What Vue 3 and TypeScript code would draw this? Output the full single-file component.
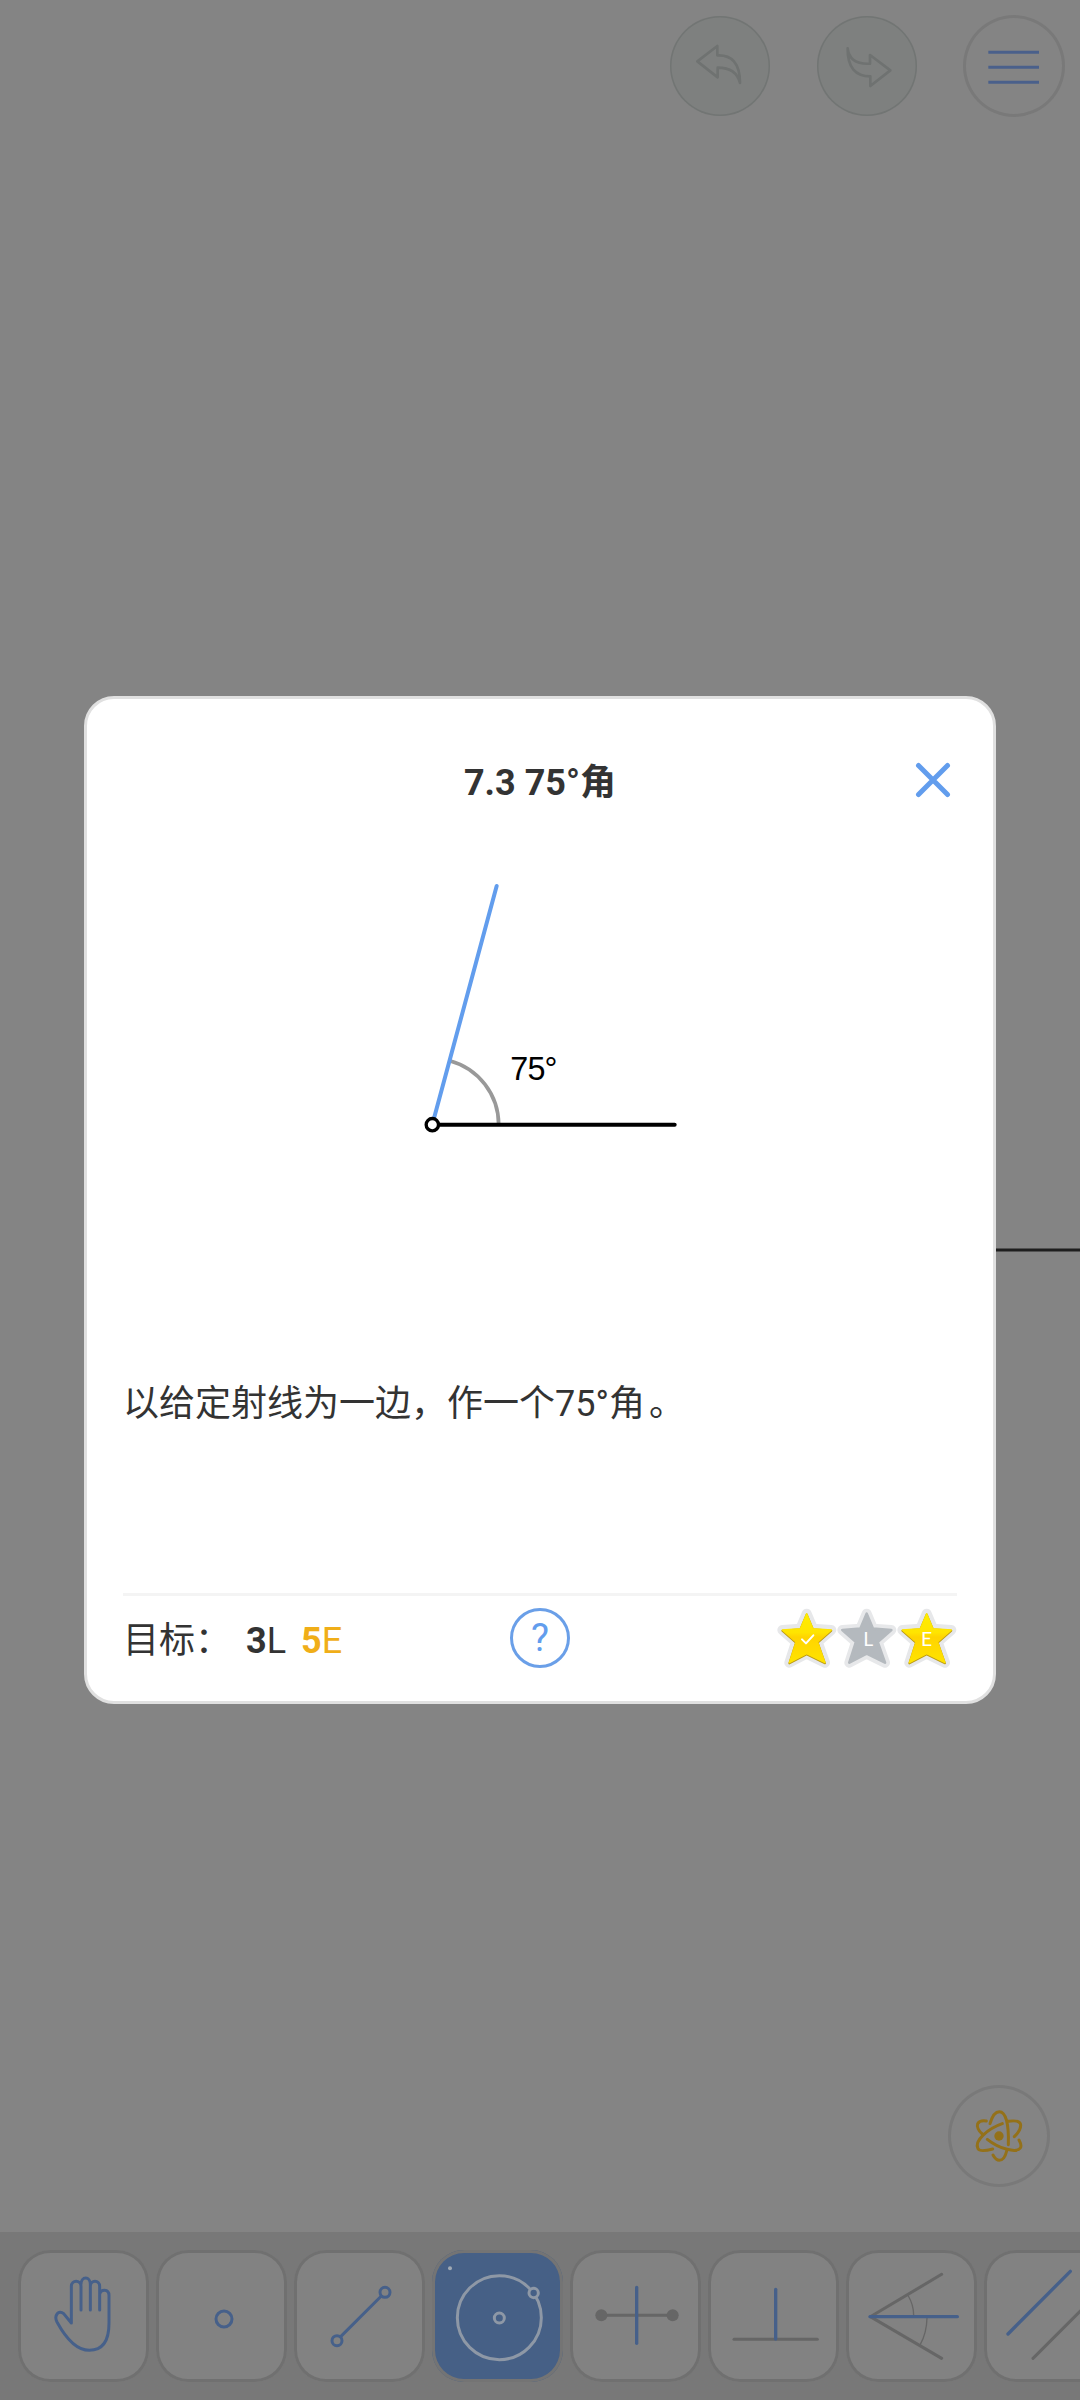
<script setup lang="ts">
type Tool = 'move' | 'point' | 'segment' | 'circle' | 'bisector' | 'perpendicular' | 'angle' | 'parallel'

interface ToolItem {
  id: Tool
  box: string
}

const tools: ToolItem[] = [
  { id: 'move', box: '56 90 393 396' },
  { id: 'point', box: '470 90 393 396' },
  { id: 'segment', box: '884 90 393 396' },
  { id: 'circle', box: '38 90 393 396' },
  { id: 'bisector', box: '452 90 393 396' },
  { id: 'perpendicular', box: '866 90 393 396' },
  { id: 'angle', box: '50 90 393 396' },
  { id: 'parallel', box: '464 90 393 396' },
]
const active: Tool = 'circle'

const stars = [
  { mark: '', earned: true },
  { mark: 'L', earned: false },
  { mark: 'E', earned: true },
]
const starPath = 'M89 17L108 62L163 66L122 102L144 164L89 137L37 164L57 102L16 66L70 62Z'
</script>

<template>
  <main class="screen">
    <header class="topbar">
      <button class="round flat" aria-label="undo">
        <svg viewBox="60 48 300 300">
          <path d="M142 184L202 138V166C244 164 270 188 270 249C262 216 240 203 203 203V232Z" />
        </svg>
      </button>
      <button class="round flat" aria-label="redo">
        <svg viewBox="501 48 300 300">
          <path d="M593 145C597 180 620 193 660 191V165L721 211L661 258V229C617 229 592 203 593 145Z" />
        </svg>
      </button>
      <button class="round menu" aria-label="menu">
        <svg viewBox="940 45 306 306">
          <path d="M1016 157H1168M1016 202H1168M1016 247H1168" />
        </svg>
      </button>
    </header>

    <section class="board">
      <svg class="ray" width="540" height="4" viewBox="0 0 540 4"><path d="M0 2H540" /></svg>
      <button class="round explore" aria-label="explore">
        <svg viewBox="84 75 306 306">
          <path d="M210 191C218 163 229 155 238 155C257 155 267 190 265 254" />
          <path d="M219 285C225 296 231 301 238 301C247 301 256 290 260 273" />
          <path d="M247 191C206 205 161 242 174 266C179 276 199 272 218 267" />
          <path d="M265 184C284 181 297 182 301 191C304 201 298 216 283 230" />
          <path d="M202 238C238 267 290 280 301 264C305 258 302 249 297 240" />
          <path d="M199 183C187 181 177 184 173 191C170 199 175 212 187 222" />
          <circle cx="237" cy="228" r="14" />
        </svg>
      </button>
    </section>

    <nav class="toolbar">
      <button v-for="tool in tools" :key="tool.id" class="tool" :class="{ active: tool.id === active }" :aria-label="tool.id">
        <svg :viewBox="tool.box">
          <g v-if="tool.id === 'move'" class="blue">
            <path d="M214 309V199C214 179 243 179 243 199V270M243 193C243 168 271 168 271 193V270M271 199C271 179 299 179 299 199V270M299 222C301 206 327 206 327 226V310C327 360 309 391 268 391C235 391 202 363 171 306C161 286 176 268 191 281L214 309" />
          </g>
          <circle v-else-if="tool.id === 'point'" class="blue thick" cx="672" cy="297" r="24" />
          <g v-else-if="tool.id === 'segment'" class="blue">
            <path d="M1022 350L1144 228" />
            <circle cx="1011" cy="362" r="15" /><circle cx="1155" cy="217" r="15" />
          </g>
          <g v-else-if="tool.id === 'circle'" class="light">
            <circle cx="238" cy="293" r="126" />
            <circle class="fill" cx="341" cy="219" r="14" />
            <circle cx="238" cy="294" r="15" />
            <circle class="dot" cx="90" cy="145" r="6" />
          </g>
          <g v-else-if="tool.id === 'bisector'">
            <path class="gray" d="M544 286H758" />
            <circle class="knob" cx="544" cy="286" r="18" /><circle class="knob" cx="758" cy="286" r="18" />
            <path class="blue wide" d="M650 202V370" />
          </g>
          <g v-else-if="tool.id === 'perpendicular'">
            <path class="gray" d="M942 358H1192" />
            <path class="blue wide" d="M1067 208V357" />
          </g>
          <g v-else-if="tool.id === 'angle'">
            <path class="gray" d="M335 163L121 290L335 415" />
            <path class="gray thin" d="M235 228Q251 255 251 286M291 294Q290 339 271 373" />
            <path class="blue wide" d="M120 290H382" />
          </g>
          <g v-else>
            <path class="blue wide" d="M534 342L721 154" />
            <path class="gray" d="M609 415L796 228" />
          </g>
        </svg>
      </button>
    </nav>

    <section class="dialog">
      <h1>7.3 75°角</h1>
      <button class="close" aria-label="close">
        <svg viewBox="0 0 36 36"><path d="M3.5 3.5L32.5 32.5M32.5 3.5L3.5 32.5" /></svg>
      </button>
      <svg class="figure" viewBox="0 0 840 870">
        <path class="arc" d="M149 602A199 199 0 0 1 296 794" />
        <path class="target" d="M99 786L290 78" />
        <path class="given" d="M97 794H824" />
        <circle cx="97" cy="794" r="18.5" />
        <text x="331" y="661">75°</text>
      </svg>
      <p class="task">以给定射线为一边，作一个75°角<span class="stop">。</span></p>
      <footer>
        <div class="goal"><span class="label">目标：</span><span><b>3</b>L</span><span class="elem"><b>5</b>E</span></div>
        <button class="help">?</button>
        <div class="stars">
          <svg v-for="star in stars" :key="star.mark" viewBox="0 0 180 180">
            <defs>
              <linearGradient id="gold" x1="0" y1="0" x2="0" y2="1">
                <stop offset="0" stop-color="#ffec00" />
                <stop offset="0.38" stop-color="#ffe500" />
                <stop offset="0.48" stop-color="#ffd400" />
                <stop offset="1" stop-color="#ffe300" />
              </linearGradient>
            </defs>
            <path class="halo" :d="starPath" />
            <g v-if="star.earned">
              <path class="edge" :d="starPath" transform="translate(0 2)" />
              <path class="gold" :d="starPath" />
            </g>
            <path v-else class="silver" :d="starPath" />
            <text v-if="star.mark" :x="star.mark === 'L' ? 94 : 89" y="114">{{ star.mark }}</text>
            <path v-else class="tick" d="M75 94L87 106L109 82" />
          </svg>
        </div>
      </footer>
    </section>
  </main>
</template>

<style>
body {
  margin: 0;
}
</style>

<style scoped>
.screen {
  position: relative;
  display: flex;
  flex-direction: column;
  width: 1080px;
  height: 2400px;
  overflow: hidden;
  background: #848484;
  font-family: Roboto, "Noto Sans CJK SC", sans-serif;
}
button {
  box-sizing: border-box;
  padding: 0;
  border: 0;
  background: none;
}
svg {
  display: block;
  fill: none;
  stroke-linecap: round;
  stroke-linejoin: round;
}
.topbar {
  display: flex;
  justify-content: flex-end;
  align-items: center;
  gap: 47px;
  padding: 15px 15px 0 0;
}
.round {
  width: 102px;
  height: 102px;
  border-radius: 50%;
  box-shadow: inset 0 0 0 3px #797979;
}
.round svg {
  width: 100%;
  height: 100%;
}
.round.flat {
  width: 100px;
  height: 100px;
  background: #7e807f;
  box-shadow: inset 0 0 0 1.5px #727574;
}
.round.menu {
  margin-left: -1px;
}
.flat path {
  stroke: #6f7271;
  stroke-width: 8;
}
.menu path {
  stroke: #4a608b;
  stroke-width: 9;
  stroke-linecap: butt;
}
.board {
  position: relative;
  flex: 1;
  display: flex;
  justify-content: flex-end;
  align-items: flex-end;
  padding: 0 30px 45px 0;
}
.ray {
  position: absolute;
  right: 0;
  top: 1131px;
}
.ray path {
  stroke: #1e1e1e;
  stroke-width: 3;
}
.explore path {
  stroke: #947119;
  stroke-width: 9;
}
.explore circle {
  fill: #947119;
}
.toolbar {
  display: flex;
  gap: 7px;
  box-sizing: border-box;
  height: 168px;
  padding: 18px 0 0 18px;
  background: #787878;
}
.tool {
  flex: none;
  width: 131px;
  height: 132px;
  border-radius: 32px;
  background: #828282;
  box-shadow: inset 0 0 0 3px #707070;
}
.tool.active {
  background: #466086;
  box-shadow: inset 0 0 0 3px #747474;
}
.tool svg {
  width: 131px;
  height: 132px;
}
.tool svg > * {
  transform: translateX(2px);
}
.blue {
  stroke: #46608a;
  stroke-width: 9;
}
.thick {
  stroke-width: 9;
}
.wide {
  stroke-width: 10;
}
.gray {
  stroke: #666;
  stroke-width: 9;
}
.thin {
  stroke-width: 4;
}
.knob {
  fill: #666;
}
.light {
  stroke: #8e98a6;
  stroke-width: 9;
}
.fill {
  fill: #466086;
}
.dot {
  fill: #a0a9b4;
  stroke: none;
}
.dialog {
  position: absolute;
  left: 84px;
  top: 696px;
  box-sizing: border-box;
  display: flex;
  flex-direction: column;
  width: 912px;
  height: 1008px;
  padding: 63px 36px 0;
  border: 3px solid #e0e0e0;
  border-radius: 30px;
  background: #fff;
  color: #333;
  font-size: 36px;
  line-height: 42px;
}
h1 {
  margin: 0;
  font-size: 36px;
  font-weight: 700;
  text-align: center;
}
.close {
  position: absolute;
  right: 42px;
  top: 63px;
  width: 36px;
  height: 36px;
}
.close path {
  stroke: #629ded;
  stroke-width: 5;
}
.figure {
  align-self: center;
  width: 280px;
  height: 290px;
  margin-top: 56px;
}
.figure path {
  stroke-width: 12;
}
.figure .arc {
  stroke: #999;
  stroke-width: 11;
  stroke-linecap: butt;
}
.figure .target {
  stroke: #629ded;
}
.figure .given {
  stroke: #000;
}
.figure circle {
  fill: #fff;
  stroke: #000;
  stroke-width: 10;
}
.figure text {
  fill: #000;
  font-family: "Liberation Sans", sans-serif;
  font-size: 97px;
  letter-spacing: -2.5px;
}
.task {
  margin: 233px 0 0;
  white-space: nowrap;
}
.stop {
  margin-left: 4px;
}
footer {
  display: grid;
  grid-template-columns: 1fr 60px 1fr;
  height: 93px;
  margin-top: auto;
  padding-top: 12px;
  border-top: 3px solid #f4f4f4;
}
.goal {
  display: flex;
  align-items: center;
  height: 65px;
}
.label {
  width: 123px;
}
.elem {
  margin-left: 15px;
  color: #f0ae18;
}
.help {
  width: 60px;
  height: 60px;
  border: 3px solid #6a9fe8;
  border-radius: 50%;
  color: #629ded;
  font: 38px/51px Roboto, sans-serif;
}
.stars {
  display: flex;
  justify-content: flex-end;
}
.stars svg {
  width: 60px;
  height: 60px;
}
.halo {
  fill: #e7e8ea;
  stroke: #e7e8ea;
  stroke-width: 30;
}
.edge {
  fill: #bb9a15;
  stroke: #bb9a15;
  stroke-width: 6;
}
.gold {
  fill: url(#gold);
  stroke: url(#gold);
  stroke-width: 4;
}
.silver {
  fill: #b4b9be;
  stroke: #b4b9be;
  stroke-width: 8;
}
.stars text {
  fill: #fff;
  font-family: Lato, sans-serif;
  font-size: 58px;
  text-anchor: middle;
}
.tick {
  stroke: #fff;
  stroke-width: 6;
}
</style>
